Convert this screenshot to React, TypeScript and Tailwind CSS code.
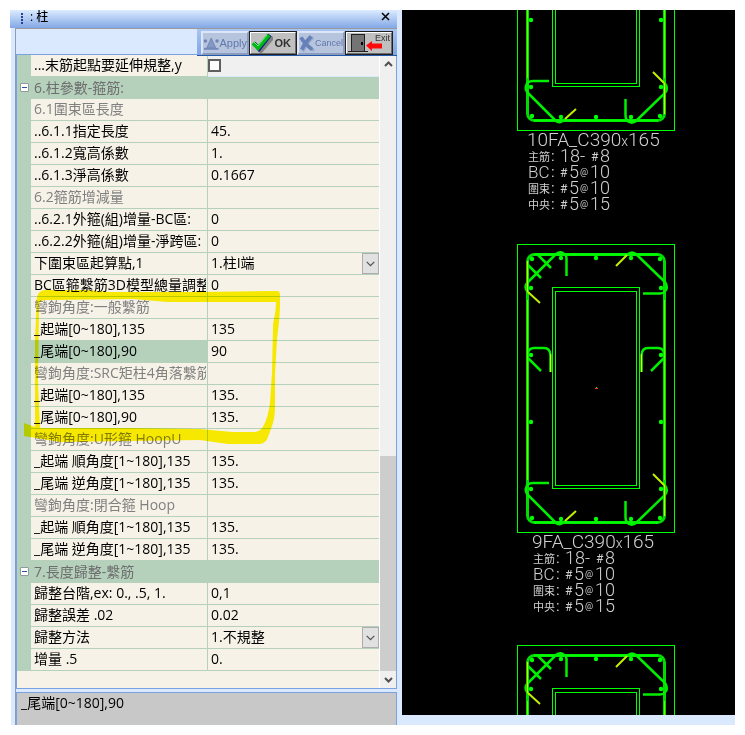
import React, { useState } from "react";

type Row =
  | { kind: "check"; label: string }
  | { kind: "group"; label: string }
  | { kind: "heading"; label: string }
  | { kind: "text"; label: string; value: string; selected?: boolean }
  | { kind: "select"; label: string; value: string };

const rows: Row[] = [
  { kind: "check", label: "...末筋起點要延伸規整,y" },
  { kind: "group", label: "6.柱參數-箍筋:" },
  { kind: "heading", label: "6.1圍束區長度" },
  { kind: "text", label: "..6.1.1指定長度", value: "45." },
  { kind: "text", label: "..6.1.2寬高係數", value: "1." },
  { kind: "text", label: "..6.1.3淨高係數", value: "0.1667" },
  { kind: "heading", label: "6.2箍筋增減量" },
  { kind: "text", label: "..6.2.1外箍(組)增量-BC區:", value: "0" },
  { kind: "text", label: "..6.2.2外箍(組)增量-淨跨區:", value: "0" },
  { kind: "select", label: "下圍束區起算點,1", value: "1.柱I端" },
  { kind: "text", label: "BC區箍繫筋3D模型總量調整", value: "0" },
  { kind: "heading", label: "彎鉤角度:一般繫筋" },
  { kind: "text", label: "_起端[0~180],135", value: "135" },
  { kind: "text", label: "_尾端[0~180],90", value: "90", selected: true },
  { kind: "heading", label: "彎鉤角度:SRC矩柱4角落繫筋" },
  { kind: "text", label: "_起端[0~180],135", value: "135." },
  { kind: "text", label: "_尾端[0~180],90", value: "135." },
  { kind: "heading", label: "彎鉤角度:U形箍 HoopU" },
  { kind: "text", label: "_起端 順角度[1~180],135", value: "135." },
  { kind: "text", label: "_尾端 逆角度[1~180],135", value: "135." },
  { kind: "heading", label: "彎鉤角度:閉合箍 Hoop" },
  { kind: "text", label: "_起端 順角度[1~180],135", value: "135." },
  { kind: "text", label: "_尾端 逆角度[1~180],135", value: "135." },
  { kind: "group", label: "7.長度歸整-繫筋" },
  { kind: "text", label: "歸整台階,ex: 0., .5, 1.", value: "0,1" },
  { kind: "text", label: "歸整誤差 .02", value: "0.02" },
  { kind: "select", label: "歸整方法", value: "1.不規整" },
  { kind: "text", label: "增量 .5", value: "0." },
];

function PropertyRow({ row, id }: { row: Row; id: string }) {
  const [checked, setChecked] = useState(false);

  if (row.kind === "group") {
    return (
      <div className="flex h-[22px] items-center border-b border-[#b5d1bc] bg-[#b5d1bc] text-[#6d6d6d]">
        <div className="flex w-[14px] shrink-0 justify-center">
          <button
            aria-label={"收合 " + row.label}
            className="flex size-[9px] items-center justify-center rounded-[1px] border border-[#8f9a9f] bg-white"
          >
            <span className="h-px w-[5px] bg-[#2f4f9f]" />
          </button>
        </div>
        <h2 className="pl-[3px]">{row.label}</h2>
      </div>
    );
  }

  const selected = row.kind === "text" && row.selected;
  const muted = row.kind === "heading";
  return (
    <div className="flex h-[22px]">
      <div className="w-[14px] shrink-0 bg-[#b5d1bc]" />
      <div
        className={
          "w-[177px] shrink-0 border-r border-b border-[#b5d1bc] pr-px pl-[3px] " +
          (selected ? "bg-[#b5d1bc] " : "") +
          (muted ? "text-[#808080]" : "text-black")
        }
      >
        {muted ? (
          <h3 className="overflow-hidden whitespace-nowrap">{row.label}</h3>
        ) : (
          <label htmlFor={id} className="block overflow-hidden whitespace-nowrap">
            {row.label}
          </label>
        )}
      </div>
      <div
        className={
          "flex min-w-0 flex-1 border-b " +
          (row.kind === "check" ? "items-center border-[#dbe9fe] bg-[#f0f0f0]" : "border-[#b5d1bc]")
        }
      >
        {row.kind === "check" && (
          <input
            id={id}
            type="checkbox"
            checked={checked}
            onChange={() => setChecked(!checked)}
            className="size-[13px] appearance-none border-2 border-[#5f5f5f] bg-white checked:bg-[#5f5f5f]"
          />
        )}
        {row.kind === "text" && (
          <input
            id={id}
            defaultValue={row.value}
            className="h-5 w-full min-w-0 bg-transparent px-[3px] outline-none"
          />
        )}
        {row.kind === "select" && (
          <div className="relative flex w-full">
            <select
              id={id}
              className="h-5 w-full appearance-none bg-transparent pr-5 pl-[3px] outline-none"
            >
              <option>{row.value}</option>
            </select>
            <span className="pointer-events-none absolute inset-y-0 right-0 flex w-[17px] items-center justify-center border border-[#adadad] bg-[#e1e1e1]">
              <svg width="9" height="6" viewBox="0 0 9 6" fill="none" stroke="#505050" strokeWidth="1.2">
                <path d="M.7 .8 4.5 4.6 8.3 .8" />
              </svg>
            </span>
          </div>
        )}
      </div>
    </div>
  );
}

const toolButton =
  "flex h-6 w-12 shrink-0 items-center justify-between border-2 font-['Liberation_Sans',sans-serif] leading-none";
const enabled = " border-t-white border-l-white border-r-[#6c6c6c] border-b-[#6c6c6c] bg-[#c0c0c0] text-[#303030] outline outline-[#202020] -outline-offset-1";
const disabled = " border-t-[#dde6f6] border-l-[#dde6f6] border-r-[#8b9bbd] border-b-[#8b9bbd] bg-[#b7c4de] text-[#6078ac]";

function Toolbar() {
  return (
    <div className="flex h-[26px] justify-end border-t border-[#9a9a9a] bg-[#dbe9fe]">
      <div className="z-10 -mb-0.5 flex h-[27px] w-[200px] border-b border-[#2458a8] bg-linear-to-b from-[#a9c5f3] to-[#7fa5e4] pt-0.5 pl-1">
        <button disabled className={toolButton + disabled + " text-[11px]"}>
          <svg width="17" height="18" viewBox="0 0 17 18">
            <path d="M8.500 4 13 14H4Z" fill="#8498c4" stroke="#6f84b4" />
            <path d="M1 15h15" stroke="#7488b8" strokeWidth="2" />
            <circle cx="2.500" cy="7" r="1.800" fill="#7085b4" />
            <circle cx="14.500" cy="7" r="1.800" fill="#7085b4" />
          </svg>
          <span>Apply</span>
        </button>
        <button className={toolButton + enabled + " pr-1 text-[10px] font-bold"}>
          <svg width="22" height="20" viewBox="0 0 22 20">
            <path d="M6 13 10 18 22 4" fill="none" stroke="#808080" strokeWidth="4" />
            <path d="M3 10 8 16 19 2" fill="none" stroke="#102080" strokeWidth="4" />
            <path d="M2 10 7 15 18 2" fill="none" stroke="#00b818" strokeWidth="4" />
            <path d="M3 9 7 13 16 2" fill="none" stroke="#6ff06a" strokeWidth="1" />
          </svg>
          <span className="text-[11px]">OK</span>
        </button>
        <button disabled className={toolButton + disabled + " text-[9px]"}>
          <svg width="16" height="19" viewBox="0 0 17 19" fill="none">
            <path d="M3 4C6 9 10 13 16 17M15 3C10 7 7 12 4 18" stroke="#94a5c9" strokeWidth="3" />
            <path d="M2 3C5 8 9 12 14 16M13 2C9 6 5 11 3 16" stroke="#6680b8" strokeWidth="4" />
          </svg>
          <span>Cancel</span>
        </button>
        <button className={toolButton + enabled + " relative text-[9px]"}>
          <svg width="44" height="20" viewBox="0 0 44 20">
            <path d="M1 18.500H21" stroke="#202020" />
            <rect x="4.500" y="1.500" width="13" height="17" fill="#747474" stroke="#202020" />
            <path d="M15 9v3" stroke="#000" strokeWidth="2" />
            <path d="M19 12.500 25 8v2.500h10v5H25V18Z" fill="#ff0a0a" />
          </svg>
          <span className="absolute top-px right-px">Exit</span>
        </button>
      </div>
    </div>
  );
}

function ScrollBar() {
  return (
    <div className="flex w-[17px] shrink-0 flex-col border-l border-white bg-[#f0f0f0]">
      <div className="flex h-[18px] items-center justify-center">
        <svg width="9" height="6" viewBox="0 0 9 6" fill="none" stroke="#505050" strokeWidth="2">
          <path d="M1 5 4.500 1.500 8 5" />
        </svg>
      </div>
      <div className="flex flex-1 flex-col justify-end">
        <div className="h-[215px] bg-[#cdcdcd]" />
      </div>
      <div className="flex h-[17px] items-center justify-center">
        <svg width="9" height="6" viewBox="0 0 9 6" fill="none" stroke="#505050" strokeWidth="2">
          <path d="M1 1 4.500 4.500 8 1" />
        </svg>
      </div>
    </div>
  );
}

/* Highlighter stroke lying over the hook-angle rows */
function Highlighter() {
  return (
    <svg
      className="pointer-events-none absolute top-[290px] left-[24px] mix-blend-multiply"
      width="258"
      height="156"
      viewBox="24 290 258 156"
    >
      <path
        fillRule="evenodd"
        fill="#fff500"
        d="M37 297Q38 291 45 290L86 290 110 292 200 292 277 291Q280 291 280 295L280 303C280 318 278 330 277 340L275 373 275 407Q275 418 272 426L268 437Q266 443 260 444L228 444 200 440 130 441 60 442 24 436V423L35 427 35 340ZM39 304Q40 300 46 300L133 299 167 302 276 302C276 314 273 320 273 327L272 373 270 403Q268 417 264 425 261 431 255 432L232 432 200 429 133 428 40 428 38 383Z"
      />
    </svg>
  );
}

const dots: [number, number][] = [
  [532, 259], [561, 258], [596, 258], [631, 258], [660, 259],
  [531, 288], [661, 288], [531, 355], [661, 355], [531, 422], [661, 422],
  [531, 489], [661, 489], [532, 518], [561, 519], [596, 519], [631, 519], [660, 518],
];

/* One column section, drawn at the place of the middle one */
function ColumnSection({ dy }: { dy: number }) {
  return (
    <g transform={"translate(0 " + dy + ")"} fill="none" stroke="#00ff00">
      <rect x="517.500" y="244.500" width="157" height="288" />
      <rect x="552.500" y="287.500" width="87" height="201" />
      <rect x="555.500" y="291.500" width="81" height="194" />
      <rect x="527.500" y="254.500" width="137" height="268" rx="7" stroke="#00dc00" strokeWidth="3" />
      <path d="M534 254.500H658M534 522.500H658" strokeWidth="2" />
      <g strokeWidth="2.500" stroke="#00f000">
        <path d="M538 255 551 268M528 265 541 278" />
        <path d="M528 292Q523 287 528 282L555 255Q559 251 563 253 567 255 566.500 260V276" />
        <path d="M627 255Q632 250 637 255L665 282Q668 287 666 290 664 293.500 660 293.500H643" />
        <path d="M528 353Q529 348 534 348H544Q550 348 550.500 355V372M528 358 541 371" />
        <path d="M664 353Q663 348 658 348H648Q642 348 641.500 355V372M664 358 651 371" />
        <path d="M549 483H533Q527 483 526 488 525 492 528 495L555 522Q560 527 565 521" />
        <path d="M664 484Q669 490 665 495L637 522Q633 526 629 524 625.500 522 625.500 517V501" />
      </g>
      <g stroke="#c0f000" strokeWidth="2">
        <path d="M528 292 540 303M616 266 627 255M565 521 576 511M653 474 664 485" />
      </g>
      <path d="M664.500 300V480M527.500 300V480" stroke="#66ff00" />
      <g stroke="#e0ff00">
        <path d="M527.500 261V292M664.500 485V516M550.500 354V372M641.500 354V372" />
      </g>
      <g fill="#00ff00" stroke="none">
        {dots.map(([x, y]) => (
          <circle key={x + "-" + y} cx={x} cy={y} r="2.200" />
        ))}
      </g>
    </g>
  );
}

function SectionLabel({ x, y, name, nameX }: { x: number; y: number; name: string; nameX: number }) {
  const lines = [
    { head: "主筋", mark: "", a: "18-", b: "8" },
    { head: "BC", mark: "#", a: "5", b: "10" },
    { head: "圍束", mark: "#", a: "5", b: "10" },
    { head: "中央", mark: "#", a: "5", b: "15" },
  ];
  return (
    <g
      fill="#d0d0d0"
      className="font-['Roboto','Noto_Sans_CJK_TC',sans-serif] text-[18px] font-light"
    >
      <text x={nameX} y={y} fontSize="19" className="text-[19px]">
        {name}_C390<tspan fontSize="14">x</tspan>165
      </text>
      {lines.map((l, i) => {
        const base = y + 16 * (i + 1);
        return (
          <text key={l.head} x={x} y={base}>
            {l.head === "BC" ? (
              <tspan fontSize="17">BC</tspan>
            ) : (
              <tspan fontSize="11" fontWeight="400" y={base - 1}>{l.head}</tspan>
            )}
            <tspan x={x + 23} y={base - 1} fontSize="15" fontWeight="400">:</tspan>
            {l.mark ? (
              <>
                <tspan x={x + 32} y={base - 1} fontSize="12" fontWeight="400">#</tspan>
                <tspan x={x + 41} y={base}>{l.a}</tspan>
                <tspan x={x + 52} y={base - 3} fontSize="9" fontWeight="400">@</tspan>
                <tspan x={x + 62} y={base}>{l.b}</tspan>
              </>
            ) : (
              <>
                <tspan x={x + 32} y={base}>{l.a}</tspan>
                <tspan x={x + 63} y={base - 1} fontSize="12" fontWeight="400">#</tspan>
                <tspan x={x + 72} y={base}>{l.b}</tspan>
              </>
            )}
          </text>
        );
      })}
    </g>
  );
}

function Drawing() {
  return (
    <main className="min-w-0 flex-1 overflow-hidden bg-[#dbe9fe]">
      <div className="bg-black">
        <svg width="333" height="705" viewBox="402 10 333 705" role="img" aria-label="柱斷面圖">
          <ColumnSection dy={-402} />
          <ColumnSection dy={0} />
          <ColumnSection dy={401} />
          <path d="M595 388.500H598" stroke="#ff2020" />
          <path d="M596.500 387V388" stroke="#00ff00" />
          <SectionLabel x={528} y={146} nameX={527} name="10FA" />
          <SectionLabel x={533} y={548} nameX={532} name="9FA" />
        </svg>
      </div>
    </main>
  );
}

export default function App() {
  return (
    <div className="relative bg-white p-2.5 font-['Open_Sans','Noto_Sans_CJK_TC',sans-serif] text-[14px] leading-[20px] text-black">
      <div className="flex">
        <aside className="w-[387px] shrink-0">
          <header className="flex h-[18px] items-center bg-linear-to-b from-[#dcebff] to-[#83a8e6] pr-1.5 pl-2.5 text-[12px] leading-none">
            <svg width="4" height="12" viewBox="0 0 4 12" fill="#27418a" aria-hidden="true">
              <path d="M1 0h2v2H1zM1 3h2v2H1zM1 6h2v2H1zM1 9h2v2H1z" />
            </svg>
            <h1 className="flex-1 pb-1 pl-1.5 font-medium">: 柱</h1>
            <button aria-label="關閉" className="flex size-3 items-center justify-center pb-1.5">
              <svg width="9" height="9" viewBox="0 0 9 9" stroke="#000" strokeWidth="1.500">
                <path d="M1 1 8 8M8 1 1 8" />
              </svg>
            </button>
          </header>
          <div className="ml-px border-l-4 border-[#dbe9fe]">
            <div className="border-l border-[#8a9cb8]">
              <Toolbar />
              <div className="flex border border-[#7ba2e0] bg-[#f6f2e7]">
                <div className="min-w-0 flex-1 pb-[17px]">
                  {rows.map((row, i) => (
                    <PropertyRow key={i} row={row} id={"prop-" + i} />
                  ))}
                </div>
                <ScrollBar />
              </div>
              <div className="h-[3px] bg-[#dbe9fe]" />
              <p className="h-[33px] border border-b-0 border-[#7ba2e0] bg-[#c8c8c8] pl-1">
                _尾端[0~180],90
              </p>
            </div>
          </div>
        </aside>
        <div className="w-[5px] shrink-0 bg-[#dbe9fe]" />
        <Drawing />
      </div>
      <Highlighter />
    </div>
  );
}
